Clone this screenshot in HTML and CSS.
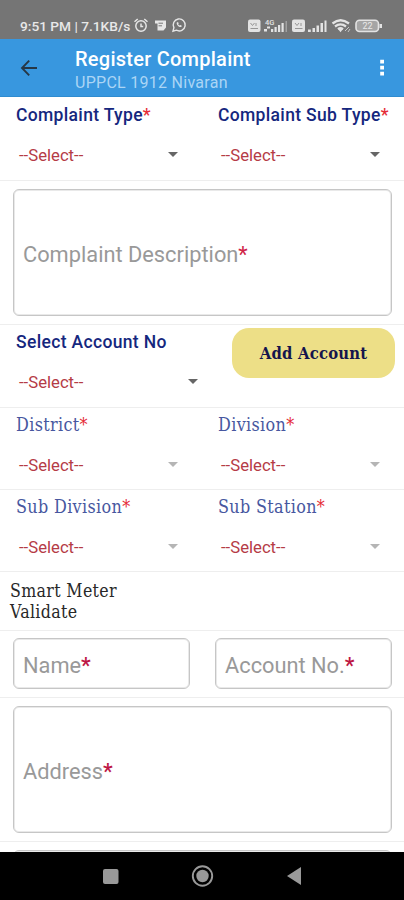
FILE: index.html
```html
<!DOCTYPE html>
<html lang="en">
<head>
<meta charset="utf-8">
<title>Register Complaint</title>
<link rel="stylesheet" href="styles.css">
</head>
<body>
<div class="screen">
  <div class="status">
    <span class="clock">9:51 PM | 7.1KB/s</span>
    <svg class="status-left" width="54" height="16" viewBox="0 0 54 16" fill="none" stroke="#e6e6e6" stroke-width="1.5">
      <circle cx="8" cy="9" r="5.200"/><path d="M8 6.500v3h2.200M1.500 4.800l3.200-2.800M14.500 4.800l-3.200-2.800"/>
      <path d="M22 3.500h11v7l-2.500 3h-6v-7h-2.500z" fill="#e6e6e6" stroke="none"/><path d="M25.500 6.200h4.500M25.500 8.800h3.500" stroke="#777" stroke-width="1"/>
      <path d="M40 14.200l.9-3.500a6 6 0 1 1 2.500 2.500z" stroke-width="1.400"/><path d="M43.800 5.500c-.8 2 2.500 5.300 4.500 4.500l.5-1.200-1.500-.9-1 .7-1.200-1.300.6-.9-.7-1.500z" fill="#e6e6e6" stroke="none"/>
    </svg>
    <svg class="status-right" width="138" height="18" viewBox="0 0 138 18" fill="#e3e3e3">
      <rect x="1" y="2.500" width="12.500" height="12.500" rx="2"/><path d="M3.500 6l2 2.500 2-2.500M9 6v3M3.500 11.500h7.500" stroke="#969696" fill="none"/>
      <text x="18" y="7.500" font-size="7.500" font-weight="500">4G</text>
      <path d="M17 12h3v2.500h-3zM20 9.500h3v2h-3zM24 12h2.200v3h-2.200zM27.500 10h2.200v5h-2.200zM31 8h2.200v7h-2.200zM34.500 6h2.200v9h-2.200z"/><path d="M38.500 4h1.500v11h-1.500z" opacity=".4"/>
      <rect x="45" y="2.500" width="13" height="12.500" rx="2"/><path d="M48 6l2 2.500 2-2.500M54 6v3M48 11.500h7.500" stroke="#969696" fill="none"/>
      <path d="M61 12.500h2.800v2.500h-2.800zM65.500 11h2.500v4h-2.500zM69.500 8.500h2.500v6.500h-2.500zM73.500 6h2.500v9h-2.500zM77.500 3.500h2v11.500h-2z"/>
      <path d="M85.500 6.500q8-6.500 16.500 0M88 9.500q5.500-4.200 11 0M91 12.200q2.500-2 5 0" stroke="#e3e3e3" stroke-width="2.300" fill="none"/><path d="M91 12h5l-2.500 3.200z"/><path d="M98 14l4-4M101 15l2-3" stroke="#c8c8c8"/>
      <rect x="109" y="3.200" width="22.500" height="11.300" rx="3.500" fill="#a5a5a5" stroke="#e3e3e3" stroke-width="1.600"/><path d="M132.500 7h2.500v4h-2.500z"/><text x="115.500" y="12" font-size="9" fill="#e8e8e8">22</text>
    </svg>
  </div>
  <header class="appbar">
    <svg class="back" width="18" height="18" viewBox="0 0 18 18" fill="none" stroke="#263746" stroke-width="1.900"><path d="M17 9H2M9.200 1.700L2 9l7.200 7.300"/></svg>
    <div class="titles"><h1>Register Complaint</h1><p>UPPCL 1912 Nivaran</p></div>
    <svg class="more" width="6" height="18" viewBox="0 0 6 18" fill="#fff"><path d="M1.200.8h3.800v3.800H1.200zM1.200 6.800h3.800v3.800H1.200zM1.200 12.800h3.800v3.800H1.200z"/></svg>
  </header>
  <main>
    <section class="row pair types">
      <div class="field"><label>Complaint Type<b>*</b></label><div class="select"><span>--Select--</span><i></i></div></div>
      <div class="field"><label>Complaint Sub Type<b>*</b></label><div class="select"><span>--Select--</span><i></i></div></div>
    </section>
    <section class="row area description"><div class="box">Complaint Description<b>*</b></div></section>
    <section class="row account">
      <div class="field"><label>Select Account No</label><div class="select"><span>--Select--</span><i></i></div></div>
      <button class="add">Add Account</button>
    </section>
    <section class="row pair serif">
      <div class="field"><label>District<b>*</b></label><div class="select"><span>--Select--</span><i></i></div></div>
      <div class="field"><label>Division<b>*</b></label><div class="select"><span>--Select--</span><i></i></div></div>
    </section>
    <section class="row pair serif">
      <div class="field"><label>Sub Division<b>*</b></label><div class="select"><span>--Select--</span><i></i></div></div>
      <div class="field"><label>Sub Station<b>*</b></label><div class="select"><span>--Select--</span><i></i></div></div>
    </section>
    <section class="row meter">Smart Meter<br>Validate</section>
    <section class="row inputs"><div class="box">Name<b>*</b></div><div class="box">Account No.<b>*</b></div></section>
    <section class="row area"><div class="box">Address<b>*</b></div></section>
    <section class="next"><div class="box"></div></section>
  </main>
  <nav>
    <svg width="404" height="48" viewBox="0 0 404 48" fill="#999"><rect x="103" y="17" width="15.500" height="15" rx="2"/><circle cx="202.500" cy="24" r="9.700" fill="none" stroke="#999" stroke-width="1.900"/><circle cx="202.500" cy="24" r="6.200"/><path d="M287 24l14-9v18z"/></svg>
  </nav>
</div>
</body>
</html>
```
FILE: styles.css
```css
* { box-sizing: border-box; }
body { margin: 0; font-family: Roboto, sans-serif; background: #fff; }
.screen { width: 404px; height: 900px; display: flex; flex-direction: column; overflow: hidden; }
.status { height: 39px; background: #757575; display: flex; padding: 17px 19px 0 20px; color: #e8e8e8; }
.clock { font-size: 13.7px; line-height: 18px; width: 113px; white-space: nowrap; font-weight: 500; }
.status-left, .status-right { flex: none; }
.status-right { margin-left: auto; }
.appbar { height: 58px; background: #3897df; display: flex; padding: 0 19px 0 20px; border-bottom: 1px solid #2f8cd0; }
.back { margin-top: 20px; flex: none; }
.titles { margin: 8px 0 0 37px; flex: 1; }
h1 { margin: 0; color: #fff; font-size: 20px; line-height: 24px; font-weight: 500; letter-spacing: .25px; }
.titles p { margin: 2px 0 0; color: #abd5f5; font-size: 16px; line-height: 20px; letter-spacing: .28px; }
.more { margin-top: 20px; flex: none; }
main { height: 755px; overflow: hidden; }
.row { border-bottom: 1px solid #eee; }
.pair { display: grid; grid-template-columns: 202px 202px; height: 82px; }
.types { height: 84px; }
.field { min-width: 0; padding: 5px 20px 0 16px; }
.types .field { padding-top: 6px; }
label { display: block; white-space: nowrap; color: #15277e; font-size: 17.5px; line-height: 24px; font-weight: 500; letter-spacing: .34px; }
label b { color: #e52b36; font-weight: 500; }
.select { display: flex; justify-content: space-between; align-items: center; padding: 0 4px 0 3px; margin-top: 16px; height: 24px; color: #b53b46; font-size: 16.7px; }
.select i { border: 5px solid transparent; border-top-color: #666; border-bottom: 0; margin-top: -1px; }
.area { height: 144px; padding: 8px 12px 8px 13px; }
.box { border: 1px solid #c6c6c6; box-shadow: inset 0 0 0 1px #e9e9e9; border-radius: 6px; color: #999; font-size: 21.8px; display: flex; align-items: center; padding: 3px 9px 0; }
.box b { color: #bd1644; font-weight: 500; }
.description .box b { font-weight: 400; color: #d02548; }
.area .box { height: 127px; }
.account { height: 83px; display: grid; grid-template-columns: 222px 1fr; }
.add { width: 163px; height: 50px; margin: 3px 0 0 10px; border: 0; border-radius: 17px; background: #eddf87; color: #15154d; font: bold 16.5px "DejaVu Serif Condensed", "DejaVu Serif", serif; letter-spacing: .2px; padding: 0; }
.serif label, .meter { font-family: "DejaVu Serif Condensed", "DejaVu Serif", serif; font-weight: 400; letter-spacing: .35px; }
.serif label { color: #4757a0; font-size: 17.8px; }
.serif .select i { border-top-color: #b5b5b5; }
.meter { height: 59px; padding: 9px 10px; color: #282828; font-size: 17.6px; line-height: 21px; }
.inputs { height: 67px; padding: 7px 12px 8px 13px; display: grid; grid-template-columns: 177px 177px; justify-content: space-between; }
.next { padding: 8px 12px 0 13px; }
.next .box { height: 40px; }
nav { height: 48px; background: #000; }
nav svg { display: block; }
```
